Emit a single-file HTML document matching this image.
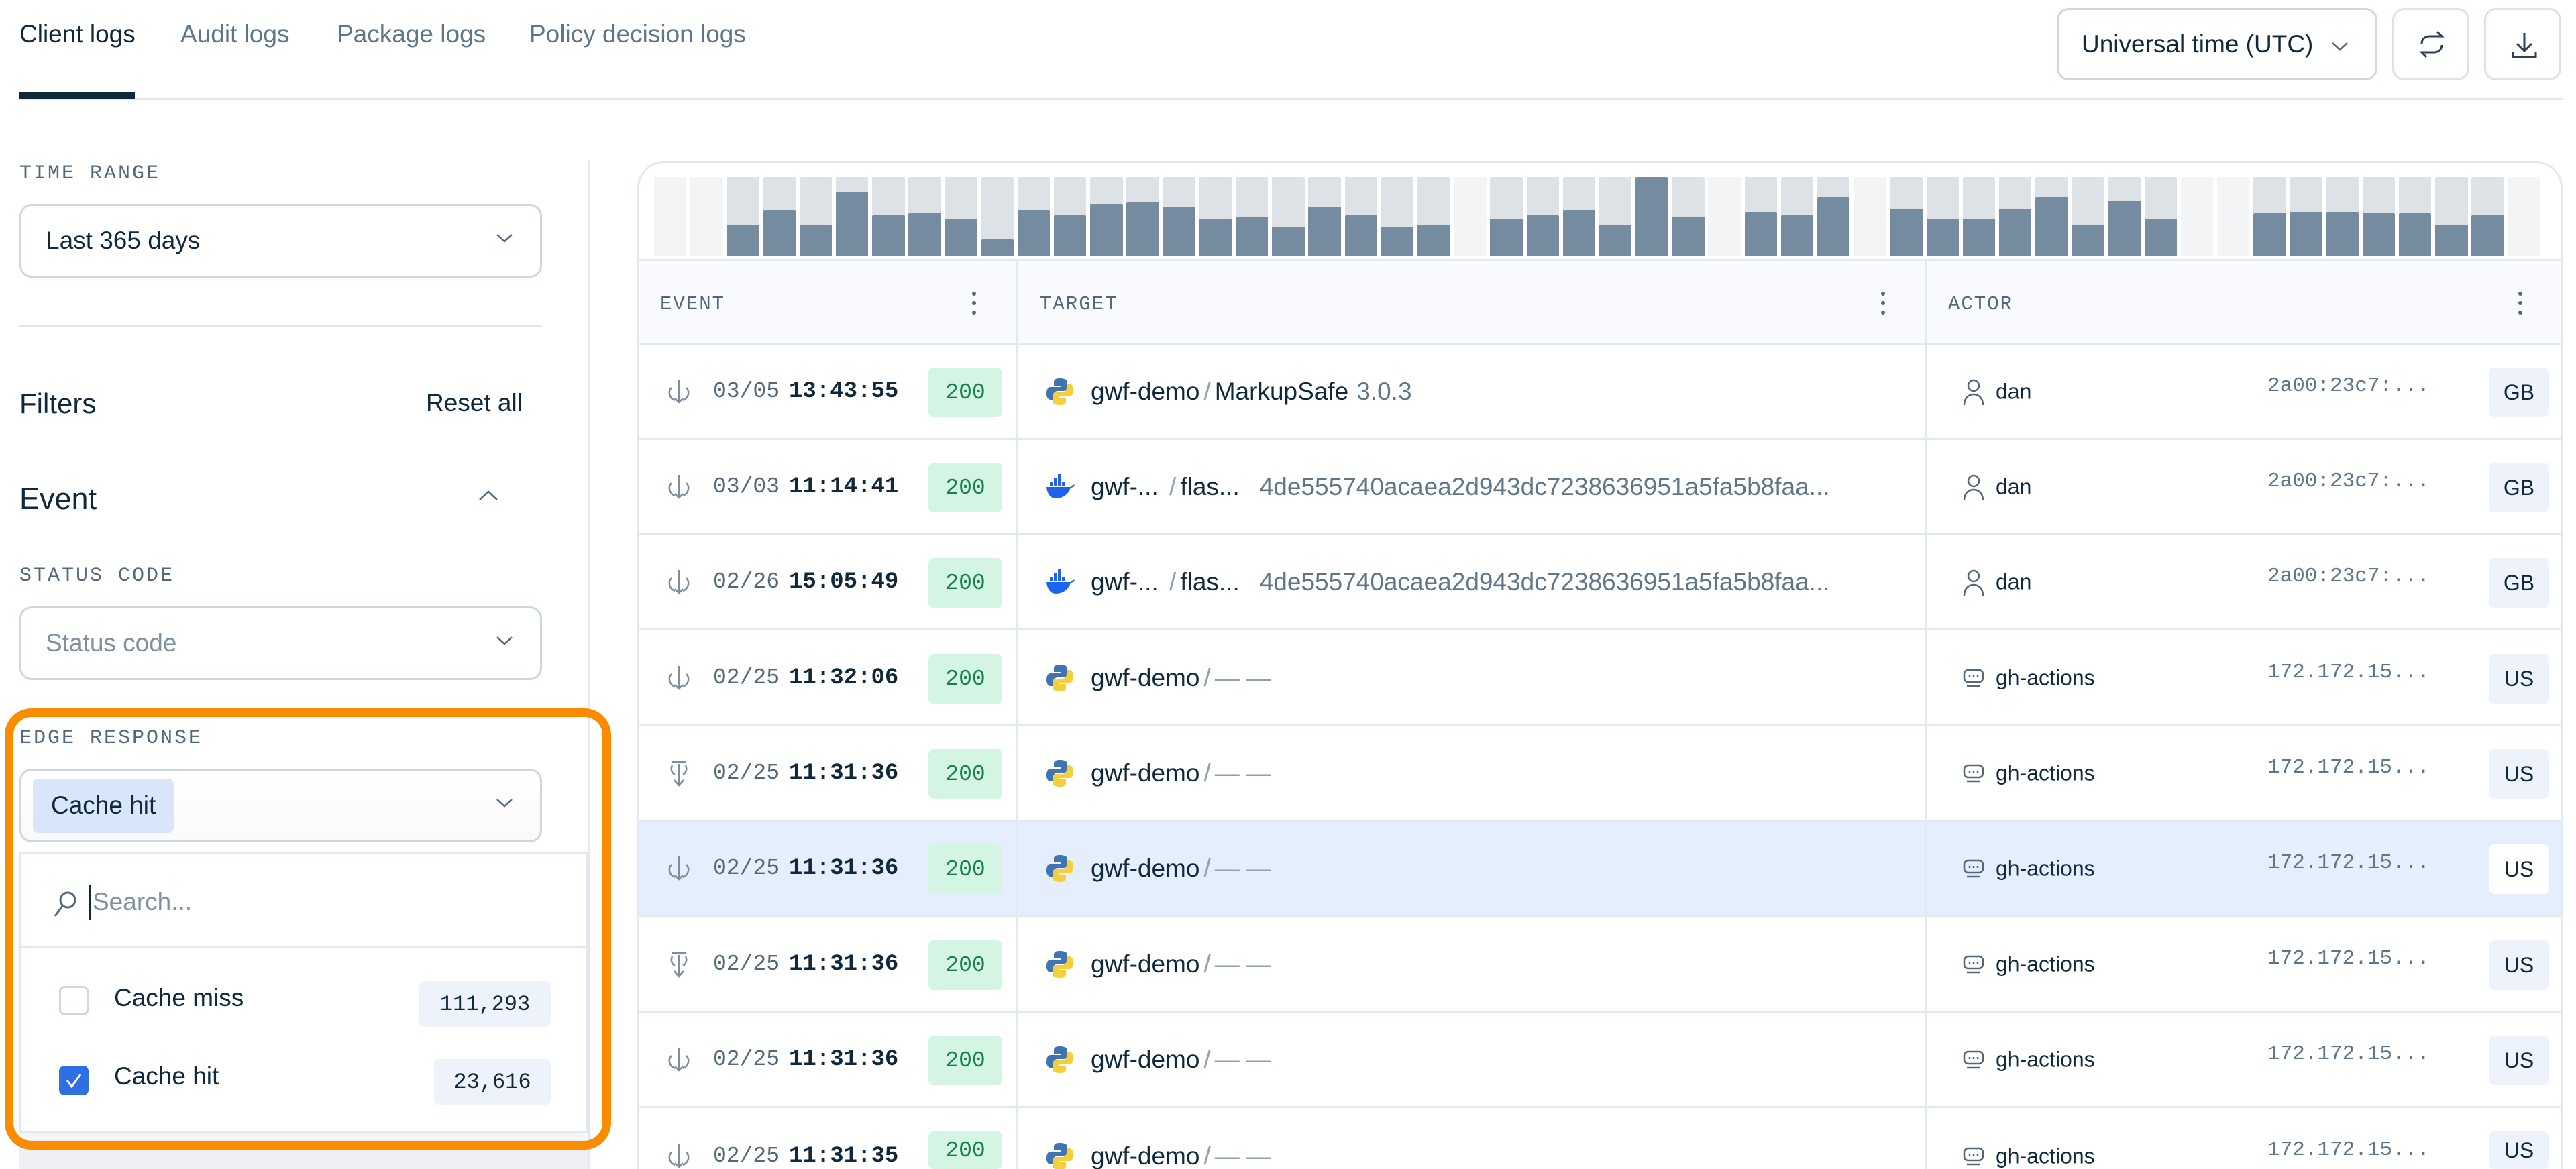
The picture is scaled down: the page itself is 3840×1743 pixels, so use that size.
<!DOCTYPE html>
<html style="overflow:hidden;height:1743px"><head><meta charset="utf-8"><style>
*{box-sizing:border-box;margin:0;padding:0}
body{width:3840px;height:1743px;overflow:hidden;background:#fff;font-family:"Liberation Sans",sans-serif;color:#10283b;position:relative}
.a{position:absolute}
.mono{font-family:"Liberation Mono",monospace}
.tab{position:absolute;top:30px;font-size:37px;color:#5f7689}
.lbl{position:absolute;left:29px;font-family:"Liberation Mono",monospace;font-size:30px;letter-spacing:3px;color:#52687a}
.sel{position:absolute;left:29px;width:779px;height:110px;border:3px solid #cdd7e1;border-radius:18px;display:flex;align-items:center;padding-left:36px;font-size:37px}
.chev{position:absolute;right:40px;top:50%;margin-top:-12px}
.bars{position:absolute;left:975px;top:264px;display:flex;gap:5.8px;height:118px;width:2830px;overflow:hidden}
.b{width:48.4px;flex:none;height:118px;background:#dde2e6;position:relative;border-radius:2px}
.b.e{background:#f3f4f6}
.b i{position:absolute;left:0;right:0;bottom:0;background:#758ca0;border-radius:2px 2px 0 0}
.th{position:absolute;font-family:"Liberation Mono",monospace;font-size:29px;letter-spacing:2px;color:#52687a;top:437px}
.row{position:absolute;left:952px;width:2866px;height:142px;border-bottom:3px solid #e3e9f0}
.row>*{position:absolute}
.dt{left:111px;top:50%;transform:translateY(-50%);font-family:"Liberation Mono",monospace;font-size:33px;color:#52687a}
.dt b{color:#10283b;margin-left:14px;font-size:34px}
.ok{left:432px;top:34px;width:110px;height:74px;background:#d4f5e4;color:#1a7f4e;border-radius:8px;font-family:"Liberation Mono",monospace;font-size:33px;display:flex;align-items:center;justify-content:center}
.tg{left:674px;top:50%;transform:translateY(-50%);font-size:37px;white-space:nowrap}
.tg .s{color:#8fa0b0;margin:0 6px}
.tg .v{color:#5f7689;margin-left:12px}
.tg .h{color:#5f7689;margin-left:30px}
.ic{top:50%;margin-top:-22px}
.an{left:1975px;top:50%;transform:translateY(-50%);font-size:32px}
.ip{left:2428px;top:44px;font-family:"Liberation Mono",monospace;font-size:31px;color:#5f7689}
.cc{left:2758px;top:34px;width:90px;height:74px;background:#eef3fb;border-radius:8px;display:flex;align-items:center;justify-content:center;font-size:32px}
.vl{position:absolute;top:387px;width:3px;height:1356px;background:#e3e9f0}
</style></head><body>

<div class="tab" style="left:29px;color:#10283b">Client logs</div>
<div class="tab" style="left:269px">Audit logs</div>
<div class="tab" style="left:502px">Package logs</div>
<div class="tab" style="left:789px">Policy decision logs</div>
<div class="a" style="left:29px;top:146px;width:3791px;height:3px;background:#e2e8f0"></div>
<div class="a" style="left:29px;top:137px;width:172px;height:10px;background:#10283b"></div>

<div class="a" style="left:3066px;top:12px;width:478px;height:108px;border:3px solid #cdd7e1;border-radius:18px;font-size:37px;display:flex;align-items:center;padding-left:34px">Universal time (UTC)
<svg class="a" style="right:40px;top:46px" width="26" height="16" viewBox="0 0 26 16"><path d="M2 3l11 10 11-10" fill="none" stroke="#52687a" stroke-width="2.5"/></svg></div>
<div class="a" style="left:3566px;top:12px;width:115px;height:108px;border:3px solid #dbe3ea;border-radius:18px"><svg class="a" style="left:31px;top:26px" width="50" height="50" viewBox="0 0 50 50" fill="none" stroke="#2b4256" stroke-width="3"><path d="M10 24c0-7 5-11 12-11h18l-7-7M40 26c0 7-5 11-12 11H10l7 7"/><path d="M30 20l8 8 8-8" transform="translate(-8 -2)" stroke="none"/></svg></div>
<div class="a" style="left:3703px;top:12px;width:115px;height:108px;border:3px solid #dbe3ea;border-radius:18px"><svg class="a" style="left:32px;top:28px" width="50" height="50" viewBox="0 0 50 50" fill="none" stroke="#2b4256" stroke-width="3"><path d="M25 6v26M14 22l11 11 11-11M8 34v8h34v-8"/></svg></div>

<!-- sidebar -->
<div class="a" style="left:876px;top:238px;width:3px;height:1505px;background:#e6ebf0"></div>
<div class="lbl" style="top:242px">TIME RANGE</div>
<div class="sel" style="top:304px">Last 365 days<svg class="chev" width="26" height="16" viewBox="0 0 26 16"><path d="M2 3l11 10 11-10" fill="none" stroke="#52687a" stroke-width="2.5"/></svg></div>
<div class="a" style="left:29px;top:484px;width:779px;height:3px;background:#e2e8f0"></div>
<div class="a" style="left:29px;top:578px;font-size:42px;font-weight:500">Filters</div>
<div class="a" style="left:635px;top:580px;font-size:37px">Reset all</div>
<div class="a" style="left:29px;top:718px;font-size:45px">Event</div>
<svg class="a" style="left:713px;top:730px" width="30" height="18" viewBox="0 0 30 18"><path d="M2 15l13-12 13 12" fill="none" stroke="#52687a" stroke-width="2.5"/></svg>
<div class="lbl" style="top:842px">STATUS CODE</div>
<div class="sel" style="top:904px;color:#7e90a0">Status code<svg class="chev" width="26" height="16" viewBox="0 0 26 16"><path d="M2 3l11 10 11-10" fill="none" stroke="#52687a" stroke-width="2.5"/></svg></div>

<div class="a" style="left:29px;top:1700px;width:848px;height:43px;background:#eef0f3"></div>
<div class="lbl" style="top:1084px">EDGE RESPONSE</div>
<div class="sel" style="top:1146px;padding-left:17px;background:linear-gradient(#fff,#fafafa)"><div style="background:#d8e5fb;border-radius:8px;height:81px;padding:0 27px;display:flex;align-items:center;font-size:37px">Cache hit</div><svg class="chev" width="26" height="16" viewBox="0 0 26 16"><path d="M2 3l11 10 11-10" fill="none" stroke="#52687a" stroke-width="2.5"/></svg></div>
<div class="a" style="left:29px;top:1271px;width:848px;height:419px;border:3px solid #e3e9f0;background:#fff;box-shadow:0 8px 16px rgba(0,0,0,.06)">
  <svg class="a" style="left:45px;top:52px" width="40" height="44" viewBox="0 0 40 44" fill="none" stroke="#52687a" stroke-width="3"><circle cx="24" cy="16" r="11"/><path d="M16 25L5 40"/></svg>
  <div class="a" style="left:101px;top:46px;width:3px;height:52px;background:#10283b"></div>
  <div class="a" style="left:106px;top:50px;font-size:37px;color:#7e90a0">Search...</div>
  <div class="a" style="left:0;top:137px;width:842px;height:3px;background:#e3e9f0"></div>
  <div class="a" style="left:56px;top:196px;width:44px;height:44px;border:3px solid #cdd7e1;border-radius:8px"></div>
  <div class="a" style="left:138px;top:193px;font-size:37px">Cache miss</div>
  <div class="a mono" style="left:593px;top:189px;width:196px;height:68px;background:#eef3fb;border-radius:8px;font-size:32px;display:flex;align-items:center;justify-content:center">111,293</div>
  <div class="a" style="left:56px;top:315px;width:44px;height:44px;background:#2f6fe4;border-radius:8px"><svg width="44" height="44" viewBox="0 0 44 44"><path d="M12 22l7 9 13-18" fill="none" stroke="#fff" stroke-width="3"/></svg></div>
  <div class="a" style="left:138px;top:310px;font-size:37px">Cache hit</div>
  <div class="a mono" style="left:615px;top:305px;width:174px;height:68px;background:#eef3fb;border-radius:8px;font-size:32px;display:flex;align-items:center;justify-content:center">23,616</div>
</div>
<div class="a" style="left:7px;top:1056px;width:904px;height:658px;border:13px solid #fb8c00;border-radius:40px"></div>

<!-- card -->
<div class="a" style="left:950px;top:240px;width:2870px;height:1503px;border:3px solid #e3e9f0;border-bottom:none;border-radius:40px 40px 0 0"></div>
<div class="bars">
<div class="b e"></div><div class="b e"></div>
<div class="b"><i style="height:47px"></i></div><div class="b"><i style="height:69px"></i></div><div class="b"><i style="height:47px"></i></div><div class="b"><i style="height:96px"></i></div><div class="b"><i style="height:61px"></i></div><div class="b"><i style="height:64px"></i></div><div class="b"><i style="height:56px"></i></div><div class="b"><i style="height:25px"></i></div><div class="b"><i style="height:69px"></i></div><div class="b"><i style="height:61px"></i></div><div class="b"><i style="height:78px"></i></div><div class="b"><i style="height:81px"></i></div><div class="b"><i style="height:74px"></i></div><div class="b"><i style="height:56px"></i></div><div class="b"><i style="height:59px"></i></div><div class="b"><i style="height:44px"></i></div><div class="b"><i style="height:74px"></i></div><div class="b"><i style="height:61px"></i></div><div class="b"><i style="height:44px"></i></div><div class="b"><i style="height:47px"></i></div>
<div class="b e"></div>
<div class="b"><i style="height:56px"></i></div><div class="b"><i style="height:61px"></i></div><div class="b"><i style="height:69px"></i></div><div class="b"><i style="height:47px"></i></div><div class="b"><i style="height:118px"></i></div><div class="b"><i style="height:59px"></i></div>
<div class="b e"></div>
<div class="b"><i style="height:66px"></i></div><div class="b"><i style="height:61px"></i></div><div class="b"><i style="height:88px"></i></div>
<div class="b e"></div>
<div class="b"><i style="height:71px"></i></div><div class="b"><i style="height:56px"></i></div><div class="b"><i style="height:56px"></i></div><div class="b"><i style="height:71px"></i></div><div class="b"><i style="height:88px"></i></div><div class="b"><i style="height:47px"></i></div><div class="b"><i style="height:83px"></i></div><div class="b"><i style="height:56px"></i></div>
<div class="b e"></div><div class="b e"></div>
<div class="b"><i style="height:64px"></i></div><div class="b"><i style="height:66px"></i></div><div class="b"><i style="height:66px"></i></div><div class="b"><i style="height:64px"></i></div><div class="b"><i style="height:64px"></i></div><div class="b"><i style="height:47px"></i></div><div class="b"><i style="height:61px"></i></div>
<div class="b e"></div>
</div>
<div class="a" style="left:952px;top:386px;width:2866px;height:128px;background:#f8fafd;border-top:3px solid #e3e9f0;border-bottom:3px solid #e3e9f0"></div>
<div class="th" style="left:984px">EVENT</div>
<div class="th" style="left:1550px">TARGET</div>
<div class="th" style="left:2904px">ACTOR</div>
<svg class="a" style="left:1446px;top:432px" width="12" height="40"><circle cx="6" cy="6" r="3" fill="#52687a"/><circle cx="6" cy="20" r="3" fill="#52687a"/><circle cx="6" cy="34" r="3" fill="#52687a"/></svg>
<svg class="a" style="left:2801px;top:432px" width="12" height="40"><circle cx="6" cy="6" r="3" fill="#52687a"/><circle cx="6" cy="20" r="3" fill="#52687a"/><circle cx="6" cy="34" r="3" fill="#52687a"/></svg>
<svg class="a" style="left:3751px;top:432px" width="12" height="40"><circle cx="6" cy="6" r="3" fill="#52687a"/><circle cx="6" cy="20" r="3" fill="#52687a"/><circle cx="6" cy="34" r="3" fill="#52687a"/></svg>

<svg width="0" height="0" style="position:absolute"><defs>
<symbol id="dn" viewBox="0 0 40 44"><path d="M20 4v34M9 16c-6 6-3 16 5 19M31 16c6 6 3 16-5 19M14 32l6 6 6-6" fill="none" stroke="#7a8ea0" stroke-width="2.5"/></symbol>
<symbol id="up" viewBox="0 0 40 44"><path d="M20 8v32M9 5h22M13 32l7 8 7-8M10 10c-3 6 0 12 4 14M30 10c3 6 0 12-4 14" fill="none" stroke="#7a8ea0" stroke-width="2.5"/></symbol>
<symbol id="py" viewBox="0 0 40 44"><path d="M20 2c-8 0-9 3-9 6v5h10v2H6c-4 0-6 4-6 10s3 9 6 9h4v-6c0-4 3-7 7-7h9c3 0 5-2 5-5V8c0-4-4-6-11-6z" fill="#3f74b0"/><path d="M20 42c8 0 9-3 9-6v-5H19v-2h15c4 0 6-4 6-10s-3-9-6-9h-4v6c0 4-3 7-7 7h-9c-3 0-5 2-5 5v8c0 4 4 6 11 6z" fill="#f5ce3b"/></symbol>
<symbol id="dk" viewBox="0 0 44 44"><path d="M2 22h36c2-3 5-4 6-3-1 3-4 4-6 4-3 9-11 16-22 16C8 39 3 32 2 22z" fill="#1d63ed"/><g fill="#1d63ed"><rect x="7" y="15" width="5" height="5"/><rect x="13" y="15" width="5" height="5"/><rect x="19" y="15" width="5" height="5"/><rect x="25" y="15" width="5" height="5"/><rect x="13" y="9" width="5" height="5"/><rect x="19" y="9" width="5" height="5"/><rect x="19" y="3" width="5" height="5"/></g></symbol>
<symbol id="us" viewBox="0 0 40 44"><circle cx="20" cy="13" r="8" fill="none" stroke="#52687a" stroke-width="2.5"/><path d="M6 42c0-10 6-16 14-16s14 6 14 16" fill="none" stroke="#52687a" stroke-width="2.5"/></symbol>
<symbol id="bt" viewBox="0 0 40 44"><rect x="6" y="10" width="28" height="18" rx="6" fill="none" stroke="#52687a" stroke-width="2.5"/><path d="M14 18v3M20 18v3M26 18v3M10 34h20" stroke="#52687a" stroke-width="2.5"/></symbol>
</defs></svg>

<!-- rows -->
<div class="row" style="top:514px">
 <svg class="ic" style="left:40px" width="40" height="44"><use href="#dn"/></svg>
 <div class="dt">03/05<b>13:43:55</b></div><div class="ok">200</div>
 <svg class="ic" style="left:608px" width="40" height="44"><use href="#py"/></svg>
 <div class="tg">gwf-demo<span class="s">/</span>MarkupSafe<span class="v">3.0.3</span></div>
 <svg class="ic" style="left:1970px" width="40" height="44"><use href="#us"/></svg>
 <div class="an" style="left:2023px">dan</div><div class="ip">2a00:23c7:...</div><div class="cc">GB</div>
</div>
<div class="row" style="top:656px">
 <svg class="ic" style="left:40px" width="40" height="44"><use href="#dn"/></svg>
 <div class="dt">03/03<b>11:14:41</b></div><div class="ok">200</div>
 <svg class="ic" style="left:606px" width="44" height="44"><use href="#dk"/></svg>
 <div class="tg">gwf-...<span class="s">&nbsp;/</span>flas...<span class="h">4de555740acaea2d943dc7238636951a5fa5b8faa...</span></div>
 <svg class="ic" style="left:1970px" width="40" height="44"><use href="#us"/></svg>
 <div class="an" style="left:2023px">dan</div><div class="ip">2a00:23c7:...</div><div class="cc">GB</div>
</div>
<div class="row" style="top:798px">
 <svg class="ic" style="left:40px" width="40" height="44"><use href="#dn"/></svg>
 <div class="dt">02/26<b>15:05:49</b></div><div class="ok">200</div>
 <svg class="ic" style="left:606px" width="44" height="44"><use href="#dk"/></svg>
 <div class="tg">gwf-...<span class="s">&nbsp;/</span>flas...<span class="h">4de555740acaea2d943dc7238636951a5fa5b8faa...</span></div>
 <svg class="ic" style="left:1970px" width="40" height="44"><use href="#us"/></svg>
 <div class="an" style="left:2023px">dan</div><div class="ip">2a00:23c7:...</div><div class="cc">GB</div>
</div>
<div class="row" style="top:941px">
 <svg class="ic" style="left:40px" width="40" height="44"><use href="#dn"/></svg>
 <div class="dt">02/25<b>11:32:06</b></div><div class="ok">200</div>
 <svg class="ic" style="left:608px" width="40" height="44"><use href="#py"/></svg>
 <div class="tg">gwf-demo<span class="s">/</span><span style="color:#8fa0b0">— —</span></div>
 <svg class="ic" style="left:1970px" width="40" height="44"><use href="#bt"/></svg>
 <div class="an" style="left:2023px">gh-actions</div><div class="ip">172.172.15...</div><div class="cc">US</div>
</div>
<div class="row" style="top:1083px">
 <svg class="ic" style="left:40px" width="40" height="44"><use href="#up"/></svg>
 <div class="dt">02/25<b>11:31:36</b></div><div class="ok">200</div>
 <svg class="ic" style="left:608px" width="40" height="44"><use href="#py"/></svg>
 <div class="tg">gwf-demo<span class="s">/</span><span style="color:#8fa0b0">— —</span></div>
 <svg class="ic" style="left:1970px" width="40" height="44"><use href="#bt"/></svg>
 <div class="an" style="left:2023px">gh-actions</div><div class="ip">172.172.15...</div><div class="cc">US</div>
</div>
<div class="row" style="top:1225px;background:#e5eefc">
 <svg class="ic" style="left:40px" width="40" height="44"><use href="#dn"/></svg>
 <div class="dt">02/25<b>11:31:36</b></div><div class="ok">200</div>
 <svg class="ic" style="left:608px" width="40" height="44"><use href="#py"/></svg>
 <div class="tg">gwf-demo<span class="s">/</span><span style="color:#8fa0b0">— —</span></div>
 <svg class="ic" style="left:1970px" width="40" height="44"><use href="#bt"/></svg>
 <div class="an" style="left:2023px">gh-actions</div><div class="ip">172.172.15...</div><div class="cc" style="background:#fff">US</div>
</div>
<div class="row" style="top:1368px">
 <svg class="ic" style="left:40px" width="40" height="44"><use href="#up"/></svg>
 <div class="dt">02/25<b>11:31:36</b></div><div class="ok">200</div>
 <svg class="ic" style="left:608px" width="40" height="44"><use href="#py"/></svg>
 <div class="tg">gwf-demo<span class="s">/</span><span style="color:#8fa0b0">— —</span></div>
 <svg class="ic" style="left:1970px" width="40" height="44"><use href="#bt"/></svg>
 <div class="an" style="left:2023px">gh-actions</div><div class="ip">172.172.15...</div><div class="cc">US</div>
</div>
<div class="row" style="top:1510px">
 <svg class="ic" style="left:40px" width="40" height="44"><use href="#dn"/></svg>
 <div class="dt">02/25<b>11:31:36</b></div><div class="ok">200</div>
 <svg class="ic" style="left:608px" width="40" height="44"><use href="#py"/></svg>
 <div class="tg">gwf-demo<span class="s">/</span><span style="color:#8fa0b0">— —</span></div>
 <svg class="ic" style="left:1970px" width="40" height="44"><use href="#bt"/></svg>
 <div class="an" style="left:2023px">gh-actions</div><div class="ip">172.172.15...</div><div class="cc">US</div>
</div>
<div class="row" style="top:1653px;height:90px;border-bottom:none">
 <svg class="ic" style="left:40px;top:71px" width="40" height="44"><use href="#dn"/></svg>
 <div class="dt" style="top:71px">02/25<b>11:31:35</b></div><div class="ok" style="height:56px">200</div>
 <svg class="ic" style="left:608px;top:71px" width="40" height="44"><use href="#py"/></svg>
 <div class="tg" style="top:71px">gwf-demo<span class="s">/</span><span style="color:#8fa0b0">— —</span></div>
 <svg class="ic" style="left:1970px;top:71px" width="40" height="44"><use href="#bt"/></svg>
 <div class="an" style="left:2023px;top:71px">gh-actions</div><div class="ip">172.172.15...</div><div class="cc" style="height:56px">US</div>
</div>
<div class="vl" style="left:1515px"></div>
<div class="vl" style="left:2869px"></div>
</body></html>
